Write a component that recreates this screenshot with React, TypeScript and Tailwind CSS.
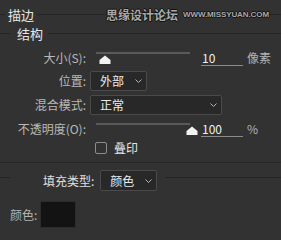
import React from 'react'

const font = { fontFamily: '"Noto Sans CJK SC", "Noto Sans", sans-serif' }

const Chevron = () => (
  <svg width="7" height="4" viewBox="0 0 7 4" className="shrink-0">
    <polyline points="0.5,0.5 3.5,3.5 6.5,0.5" fill="none" stroke="#b5b5b5" strokeWidth="1" />
  </svg>
)

const Select = ({ value, className }: { value: string; className: string }) => (
  <div
    className={`flex h-[20px] items-center justify-between rounded-[2px] border border-[#4a4a4a] bg-[#282828] pl-[9px] pr-[4px] text-[12px] text-[#ececec] ${className}`}
  >
    <span className="leading-none">{value}</span>
    <Chevron />
  </div>
)

const Slider = ({ thumb }: { thumb: number }) => (
  <div className="relative h-[16px] w-[94px] shrink-0">
    <div className="absolute left-0 right-0 top-[2px] h-[2px] bg-[#5a5a5a]" />
    <svg
      width="12"
      height="9"
      viewBox="0 0 12 9"
      className="absolute top-[5px]"
      style={{ left: thumb }}
    >
      <path d="M6 0.5 L11.5 5 L11.5 9 L0.5 9 L0.5 5 Z" fill="#f2f2f2" />
    </svg>
  </div>
)

const Label = ({ children }: { children: React.ReactNode }) => (
  <div className="w-[86px] shrink-0 text-right text-[12px] leading-[16px] text-[#b9b9b9]">{children}</div>
)

export default function App() {
  return (
    <div className="relative h-[240px] w-[281px] overflow-hidden bg-[#323232]" style={font}>
      {/* 描边 */}
      <div className="flex h-[28px] items-center">
        <div className="h-px w-[5px] bg-[#242424]" />
        <span className="ml-[3px] text-[13px] leading-none text-[#e6e6e6]">描边</span>
        <div className="ml-[3px] h-px flex-1 bg-[#242424]" />
      </div>
      <div
        className="absolute left-[106px] top-[7px] flex items-center gap-[5px] whitespace-nowrap bg-[#323232] font-bold text-[#a9a9a9]"
        style={{ textShadow: '1px 0 #111, -1px 0 #111, 0 1px #111, 0 -1px #111' }}
      >
        <span className="text-[12px] leading-[15px]">思缘设计论坛</span>
        <span
          className="text-[8px] leading-[15px] tracking-[-0.1px]"
          style={{ fontFamily: '"Liberation Sans", sans-serif' }}
        >
          WWW.MISSYUAN.COM
        </span>
      </div>

      {/* 结构 */}
      <div className="flex h-[10px] items-center">
        <div className="h-px w-[10px] bg-[#242424]" />
        <span className="ml-[7px] text-[13px] leading-none text-[#e6e6e6]">结构</span>
        <div className="ml-[5px] h-px flex-1 bg-[#242424]" />
      </div>

      {/* 大小 */}
      <div className="mt-[12px] flex h-[16px] items-start">
        <Label>大小(S):</Label>
        <div className="ml-[10px]">
          <Slider thumb={3} />
        </div>
        <div className="ml-[11px] h-[16px] w-[42px] border-b border-[#8a8a8a] pl-px text-[12px] leading-[15px] text-[#f0f0f0]">10</div>
        <span className="ml-[4px] text-[12px] leading-[16px] text-[#b4b4b4]">像素</span>
      </div>

      {/* 位置 */}
      <div className="mt-[5px] flex h-[20px] items-center">
        <Label>位置:</Label>
        <Select value="外部" className="ml-[4px] w-[57px]" />
      </div>

      {/* 混合模式 */}
      <div className="mt-[4px] flex h-[20px] items-center">
        <Label>混合模式:</Label>
        <Select value="正常" className="ml-[4px] w-[132px]" />
      </div>

      {/* 不透明度 */}
      <div className="mt-[6px] flex h-[16px] items-start">
        <Label>不透明度(O):</Label>
        <div className="ml-[10px]">
          <Slider thumb={90} />
        </div>
        <div className="ml-[11px] h-[16px] w-[42px] border-b border-[#8a8a8a] pl-px text-[12px] leading-[15px] text-[#f0f0f0]">100</div>
        <span className="ml-[4px] text-[12px] leading-[16px] text-[#b4b4b4]">%</span>
      </div>

      {/* 叠印 */}
      <div className="mt-[4px] flex h-[13px] items-center pl-[95px]">
        <div className="h-[12px] w-[12px] rounded-[2px] border border-[#8c8c8c]" />
        <span className="ml-[7px] text-[12px] leading-none text-[#e6e6e6]">叠印</span>
      </div>

      <div className="mt-[8px] h-px bg-[#262626]" />

      {/* 填充类型 */}
      <div className="mt-[7px] flex h-[21px] items-start">
        <div className="mt-[7px] h-px w-[10px] bg-[#242424]" />
        <div className="ml-[33px] text-[12px] leading-[21px] text-[#e0e0e0]">填充类型:</div>
        <Select value="颜色" className="ml-[6px] h-[21px] w-[57px]" />
        <div className="ml-[8px] mt-[7px] h-px flex-1 bg-[#242424]" />
      </div>

      {/* 颜色 */}
      <div className="mt-[10px] flex h-[27px] items-center">
        <span className="ml-[10px] text-[12px] leading-none text-[#b4b4b4]">颜色:</span>
        <div className="ml-[3px] h-[27px] w-[36px] border border-[#2c2c2c] bg-[#131313]" />
      </div>
    </div>
  )
}
